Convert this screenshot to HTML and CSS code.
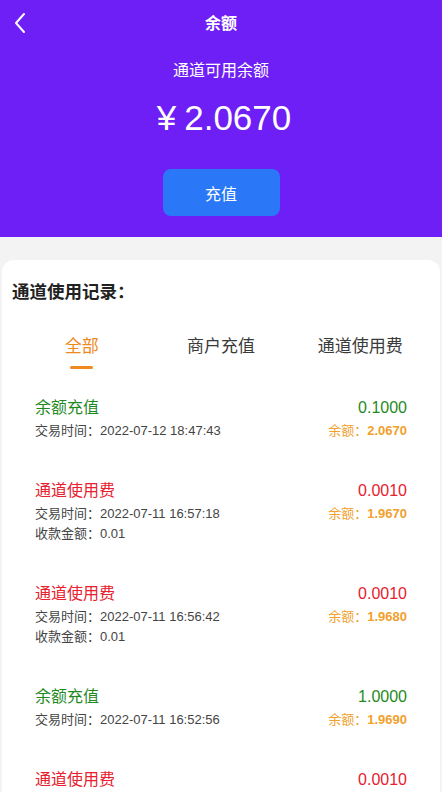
FILE: index.html
```html
<!DOCTYPE html>
<html lang="zh-CN">
<head>
    <meta charset="UTF-8">
    <meta name="viewport" content="width=device-width, initial-scale=1.0">
    <title>余额</title>
    <link rel="stylesheet" href="styles.css">
</head>
<body>
    <div class="header">
        <div class="nav">
            <svg class="back" width="14" height="22" viewBox="0 0 14 22">
                <path d="M11 2 L3 11 L11 20" fill="none" stroke="#fff" stroke-width="2" stroke-linecap="round" stroke-linejoin="round"/>
            </svg>
            <span class="nav-title">余额</span>
        </div>
        <div class="label">通道可用余额</div>
        <div class="balance"><span class="yen">¥</span>2.0670</div>
        <button class="recharge">充值</button>
    </div>

    <div class="card">
        <div class="card-title">通道使用记录：</div>
        <div class="tabs">
            <div class="tab active">全部</div>
            <div class="tab">商户充值</div>
            <div class="tab">通道使用费</div>
        </div>

        <div class="list">
            <div class="item">
                <div class="row">
                    <span class="name green">余额充值</span>
                    <span class="amount green">0.1000</span>
                </div>
                <div class="row sub">
                    <span>交易时间：2022-07-12 18:47:43</span>
                    <span class="remain">余额：<b>2.0670</b></span>
                </div>
            </div>
            <div class="item">
                <div class="row">
                    <span class="name red">通道使用费</span>
                    <span class="amount red">0.0010</span>
                </div>
                <div class="row sub">
                    <span>交易时间：2022-07-11 16:57:18</span>
                    <span class="remain">余额：<b>1.9670</b></span>
                </div>
                <div class="row sub">
                    <span>收款金额：0.01</span>
                </div>
            </div>
            <div class="item">
                <div class="row">
                    <span class="name red">通道使用费</span>
                    <span class="amount red">0.0010</span>
                </div>
                <div class="row sub">
                    <span>交易时间：2022-07-11 16:56:42</span>
                    <span class="remain">余额：<b>1.9680</b></span>
                </div>
                <div class="row sub">
                    <span>收款金额：0.01</span>
                </div>
            </div>
            <div class="item">
                <div class="row">
                    <span class="name green">余额充值</span>
                    <span class="amount green">1.0000</span>
                </div>
                <div class="row sub">
                    <span>交易时间：2022-07-11 16:52:56</span>
                    <span class="remain">余额：<b>1.9690</b></span>
                </div>
            </div>
            <div class="item">
                <div class="row">
                    <span class="name red">通道使用费</span>
                    <span class="amount red">0.0010</span>
                </div>
            </div>
        </div>
    </div>
</body>
</html>
```

FILE: styles.css
```css
* {
    margin: 0;
    padding: 0;
    box-sizing: border-box;
}

body {
    font-family: "Liberation Sans", "Noto Sans CJK SC", sans-serif;
    background-color: #f3f3f3;
    color: #333;
    overflow: hidden;
}

/* 顶部紫色区域 */
.header {
    background-color: #6e1ff6;
    color: #fff;
    text-align: center;
    padding-bottom: 21px;
}

.nav {
    height: 44px;
    display: flex;
    align-items: center;
    justify-content: center;
    position: relative;
}

.back {
    position: absolute;
    left: 13px;
    top: 12px;
}

.nav-title {
    font-size: 16px;
    font-weight: bold;
}

.label {
    margin-top: 16px;
    font-size: 16px;
    line-height: 22px;
}

.balance {
    margin-top: 14px;
    font-size: 35px;
    line-height: 44px;
    padding-left: 6px;
}

.yen {
    margin-right: 8px;
}

.recharge {
    margin-top: 29px;
    width: 117px;
    height: 47px;
    border: none;
    border-radius: 8px;
    background-color: #2a78f7;
    color: #fff;
    font-size: 16px;
    font-family: inherit;
}

/* 记录卡片 */
.card {
    margin: 23px 2px 0;
    background-color: #fff;
    border-radius: 12px 12px 0 0;
    padding: 20px 10px 0;
}

.card-title {
    font-size: 17.5px;
    font-weight: bold;
    line-height: 24px;
    color: #222;
}

.tabs {
    display: flex;
    margin-top: 31px;
}

.tab {
    flex: 1;
    text-align: center;
    font-size: 17px;
    line-height: 24px;
    color: #3a3a3a;
    padding-bottom: 10px;
    position: relative;
}

.tab.active {
    color: #ee8a1f;
}

.tab.active::after {
    content: "";
    position: absolute;
    left: 50%;
    bottom: 0;
    width: 23px;
    height: 3px;
    margin-left: -12px;
    border-radius: 2px;
    background-color: #ee8a1f;
}

.list {
    margin-top: 8px;
}

.item {
    padding: 17px 23px 19px;
}

.row {
    display: flex;
    justify-content: space-between;
    align-items: center;
    line-height: 27px;
}

.row.sub {
    font-size: 13px;
    line-height: 20px;
    color: #444;
}

.name {
    font-size: 16px;
}

.amount {
    font-size: 16px;
}

.green {
    color: #1f8a1f;
}

.red {
    color: #e8202f;
}

.remain {
    color: #f2a02c;
}

.remain b {
    font-weight: bold;
}
```
